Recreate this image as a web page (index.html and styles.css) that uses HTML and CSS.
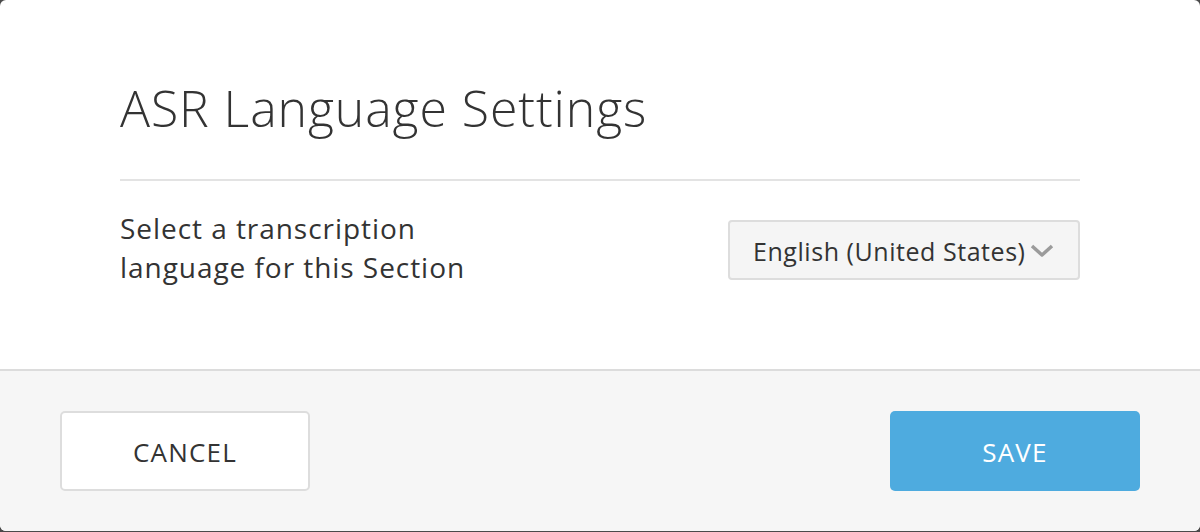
FILE: index.html
```html
<!DOCTYPE html>
<html>
<head>
<meta charset="utf-8">
<link rel="stylesheet" href="styles.css">
</head>
<body>
<div class="modal">
  <div class="modal-body">
    <h1 class="title">ASR Language Settings</h1>
    <div class="divider"></div>
    <div class="row">
      <div class="label">Select a transcription<br>language for this Section</div>
      <div class="select">
        <span class="select-text">English (United States)</span>
        <svg class="chev" width="24" height="14" viewBox="0 0 24 14"><path d="M2 2 L12 11 L22 2" fill="none" stroke="#9b9b9b" stroke-width="3.5" stroke-linejoin="round"/></svg>
      </div>
    </div>
  </div>
  <div class="modal-footer">
    <button class="btn btn-cancel">CANCEL</button>
    <button class="btn btn-save">SAVE</button>
  </div>
</div>
</body>
</html>
```
FILE: styles.css
```css
html, body {
  margin: 0;
  padding: 0;
  height: 532px;
  background: #4a4a4a;
  overflow: hidden;
}
.modal {
  width: 1200px;
  height: 531px;
  background: #fff;
  border-radius: 6px;
  overflow: hidden;
  display: flex;
  flex-direction: column;
  font-family: "Open Sans", "Noto Sans", sans-serif;
  color: #333;
}
.modal-body {
  padding: 0 120px;
  border-bottom: 2px solid #dcdcdc;
  box-sizing: border-box;
  height: 371px;
}
.title {
  margin: 0;
  padding-top: 78px;
  font-size: 50px;
  font-weight: 300;
  line-height: 60px;
  letter-spacing: 0.9px;
  color: #333;
}
.divider {
  margin-top: 41px;
  height: 2px;
  background: #e3e3e3;
}
.row {
  display: flex;
  justify-content: space-between;
  align-items: flex-start;
  margin-top: 28px;
}
.label {
  font-size: 28px;
  line-height: 39px;
  letter-spacing: 0.95px;
  color: #333;
}
.select {
  width: 352px;
  height: 60px;
  box-sizing: border-box;
  border: 2px solid #dddddd;
  border-radius: 4px;
  background: #f5f5f5;
  display: flex;
  align-items: center;
  padding-left: 23px;
  margin-top: 11px;
}
.select-text {
  font-size: 25px;
  letter-spacing: 0.55px;
  color: #333;
  margin-top: 2px;
}
.chev {
  margin-left: 4px;
  margin-top: 2px;
}
.modal-footer {
  flex: 1;
  background: #f6f6f6;
  display: flex;
  justify-content: space-between;
  align-items: flex-start;
  padding: 40px 60px 0;
}
.btn {
  width: 250px;
  height: 80px;
  border-radius: 5px;
  font-family: "Open Sans", "Noto Sans", sans-serif;
  font-size: 26px;
  letter-spacing: 1.2px;
  cursor: pointer;
  padding: 2px 0 0;
}
.btn-cancel {
  background: #fff;
  border: 2px solid #dddddd;
  color: #333;
}
.btn-save {
  background: #4eabdf;
  border: none;
  color: #fff;
}
```
